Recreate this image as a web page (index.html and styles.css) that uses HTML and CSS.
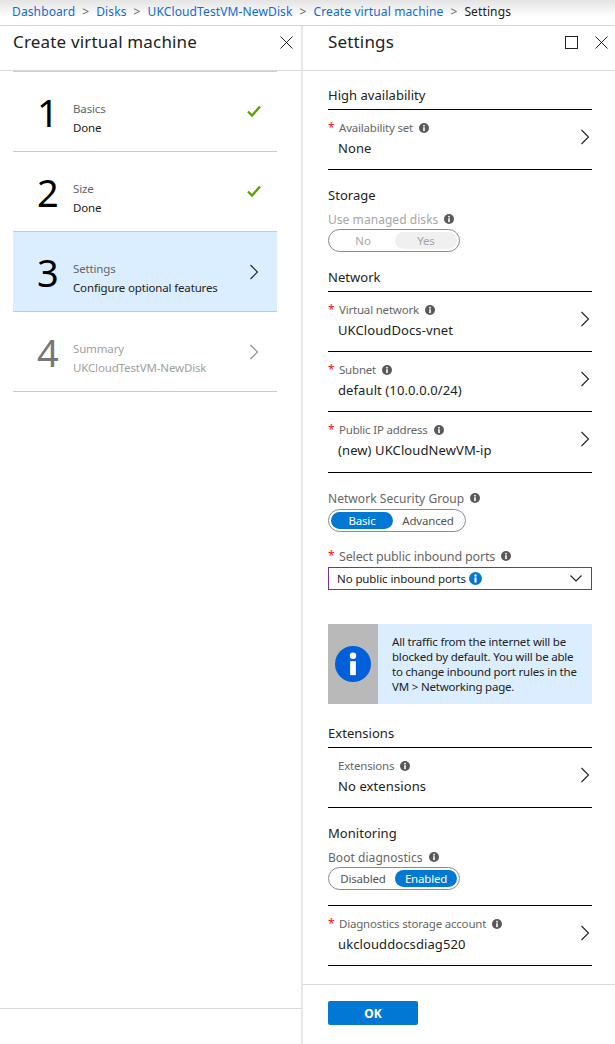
FILE: index.html
```html
<!DOCTYPE html>
<html lang="en">
  <head>
    <meta charset="UTF-8" />
    <title>Settings</title>
    <link rel="stylesheet" href="styles.css">
  </head>
  <body>
    <svg class="defs" width="0" height="0">
      <symbol id="chev" viewBox="0 0 10 16"><path d="M1.5 1 L8.5 8 L1.5 15" fill="none" stroke="currentColor" stroke-width="1.1"/></symbol>
      <symbol id="check" viewBox="0 0 14 12"><path d="M1 6.5 L5 10.5 L13 1.5" fill="none" stroke="#57a300" stroke-width="2.4"/></symbol>
      <symbol id="close" viewBox="0 0 13 13"><path d="M.5 .5 L12.5 12.5 M12.5 .5 L.5 12.5" fill="none" stroke="#222" stroke-width="1"/></symbol>
      <symbol id="info" viewBox="0 0 10 10"><circle cx="5" cy="5" r="5" fill="currentColor"/><rect x="4.2" y="4.2" width="1.6" height="3.9" fill="#fff"/><circle cx="5" cy="2.7" r=".9" fill="#fff"/></symbol>
    </svg>

    <nav class="crumbs">
      <a>Dashboard</a><i>&gt;</i><a>Disks</a><i>&gt;</i><a>UKCloudTestVM-NewDisk</a><i>&gt;</i><a>Create virtual machine</a><i>&gt;</i><span>Settings</span>
    </nav>

    <div class="panels">
      <section class="wizard">
        <header class="blade-head">
          <h2>Create virtual machine</h2>
          <svg class="head-icon"><use href="#close"/></svg>
        </header>
        <div class="steps">
          <div class="step">
            <div class="num">1</div>
            <div class="step-text"><div class="step-title">Basics</div><div>Done</div></div>
            <svg class="check"><use href="#check"/></svg>
          </div>
          <div class="step">
            <div class="num">2</div>
            <div class="step-text"><div class="step-title">Size</div><div>Done</div></div>
            <svg class="check"><use href="#check"/></svg>
          </div>
          <div class="step active">
            <div class="num">3</div>
            <div class="step-text"><div class="step-title">Settings</div><div>Configure optional features</div></div>
            <svg class="step-chev"><use href="#chev"/></svg>
          </div>
          <div class="step off">
            <div class="num">4</div>
            <div class="step-text"><div class="step-title">Summary</div><div>UKCloudTestVM-NewDisk</div></div>
            <svg class="step-chev"><use href="#chev"/></svg>
          </div>
        </div>
        <div class="wizard-foot"></div>
      </section>

      <section class="settings">
        <header class="blade-head">
          <h2>Settings</h2>
          <div class="max-box"></div>
          <svg class="head-icon"><use href="#close"/></svg>
        </header>

        <div class="form">
          <h3>High availability</h3>
          <div class="field">
            <div>
              <div class="label"><b>*</b>Availability set<svg class="tip"><use href="#info"/></svg></div>
              <div class="value">None</div>
            </div>
            <svg class="chev"><use href="#chev"/></svg>
          </div>

          <h3 class="plain">Storage</h3>
          <div class="opt-label muted">Use managed disks<svg class="tip"><use href="#info"/></svg></div>
          <div class="toggle disabled w132"><span>No</span><span class="on">Yes</span></div>

          <h3 class="net">Network</h3>
          <div class="field">
            <div>
              <div class="label"><b>*</b>Virtual network<svg class="tip"><use href="#info"/></svg></div>
              <div class="value">UKCloudDocs-vnet</div>
            </div>
            <svg class="chev"><use href="#chev"/></svg>
          </div>
          <div class="field">
            <div>
              <div class="label"><b>*</b>Subnet<svg class="tip"><use href="#info"/></svg></div>
              <div class="value">default (10.0.0.0/24)</div>
            </div>
            <svg class="chev"><use href="#chev"/></svg>
          </div>
          <div class="field tall">
            <div>
              <div class="label"><b>*</b>Public IP address<svg class="tip"><use href="#info"/></svg></div>
              <div class="value">(new) UKCloudNewVM-ip</div>
            </div>
            <svg class="chev"><use href="#chev"/></svg>
          </div>

          <div class="opt-label nsg">Network Security Group<svg class="tip"><use href="#info"/></svg></div>
          <div class="toggle w138"><span class="on">Basic</span><span>Advanced</span></div>

          <div class="opt-label ports"><b>*</b>Select public inbound ports<svg class="tip"><use href="#info"/></svg></div>
          <div class="select">
            <span>No public inbound ports</span>
            <svg class="tip-blue"><use href="#info"/></svg>
            <svg class="caret" viewBox="0 0 12 7"><path d="M.5 .5 L6 6 L11.5 .5" fill="none" stroke="#222" stroke-width="1.1"/></svg>
          </div>

          <div class="notice">
            <div class="notice-side"><svg class="notice-icon"><use href="#info"/></svg></div>
            <p>All traffic from the internet will be blocked by default. You will be able to change inbound port rules in the VM &gt; Networking page.</p>
          </div>

          <h3 class="ext">Extensions</h3>
          <div class="field">
            <div>
              <div class="label"><em></em>Extensions<svg class="tip"><use href="#info"/></svg></div>
              <div class="value">No extensions</div>
            </div>
            <svg class="chev"><use href="#chev"/></svg>
          </div>

          <h3 class="plain">Monitoring</h3>
          <div class="opt-label">Boot diagnostics<svg class="tip"><use href="#info"/></svg></div>
          <div class="toggle w132"><span>Disabled</span><span class="on">Enabled</span></div>

          <div class="field last">
            <div>
              <div class="label"><b>*</b>Diagnostics storage account<svg class="tip"><use href="#info"/></svg></div>
              <div class="value">ukclouddocsdiag520</div>
            </div>
            <svg class="chev"><use href="#chev"/></svg>
          </div>
        </div>

        <footer class="settings-foot">
          <button type="button">OK</button>
        </footer>
      </section>
    </div>
  </body>
</html>
```

FILE: styles.css
```css
* {
  box-sizing: border-box;
}

html,
body {
  margin: 0;
  height: 1044px;
  overflow: hidden;
}

body {
  font-family: "Noto Sans", Arial, sans-serif;
  font-size: 12px;
  color: #222;
  background-color: #fff;
}

.defs {
  position: absolute;
}

/* breadcrumb */
.crumbs {
  height: 26px;
  padding: 0 0 2px 12px;
  display: flex;
  align-items: center;
  white-space: nowrap;
  letter-spacing: 0.12px;
  background: linear-gradient(#e4e4e4, #fff 70%);
  border-bottom: 1px solid #d4d4d4;
}

.crumbs a {
  color: #0f6cd6;
}

.crumbs i {
  font-style: normal;
  color: #666;
  margin: 0 7px;
}

.panels {
  display: flex;
  height: 1018px;
}

.blade-head {
  height: 45px;
  padding-top: 1px;
  display: flex;
  border-bottom: 1px solid #d9d9d9;
}

.blade-head h2 {
  margin: 0;
  flex: 1;
  font-size: 17px;
  line-height: 30px;
  font-weight: 400;
  letter-spacing: 0.17px;
}

.head-icon {
  width: 13px;
  height: 13px;
  margin-top: 9px;
}

/* left blade */
.wizard {
  width: 303px;
  border-right: 2px solid #e6e6e6;
  display: flex;
  flex-direction: column;
}

.wizard .blade-head {
  padding-left: 13px;
  padding-right: 8px;
}

.steps {
  flex: 1;
  margin: 0 24px 0 13px;
  border-top: 1px solid #cfcfcf;
}

.step {
  height: 80px;
  display: flex;
  align-items: center;
  border-bottom: 1px solid #c8c8c8;
}

.step .num {
  width: 60px;
  padding-left: 24px;
  font-size: 38px;
  line-height: 42px;
  color: #000;
}

.step-text {
  flex: 1;
  padding-top: 12px;
  line-height: 19px;
  letter-spacing: -0.15px;
  font-size: 11.5px;
}

.step-title {
  color: #666;
}

.check {
  width: 14px;
  height: 12px;
  margin-right: 16px;
  margin-bottom: 1px;
}

.step-chev {
  width: 10px;
  height: 16px;
  margin-right: 18px;
  color: #222;
}

.step.active {
  background-color: #dbeeff;
}

.step.off .num {
  color: #777;
}

.step.off .step-text,
.step.off .step-title {
  color: #a0a0a0;
}

.step.off .step-chev {
  color: #888;
}

.wizard-foot {
  height: 36px;
  border-top: 1px solid #d9d9d9;
}

/* right blade */
.settings {
  flex: 1;
  display: flex;
  flex-direction: column;
}

.settings .blade-head {
  padding-left: 25px;
  padding-right: 7px;
}

.max-box {
  width: 13px;
  height: 13px;
  margin: 9px 17px 0 0;
  border: 1px solid #222;
}

.form {
  flex: 1;
  padding: 0 23px 0 25px;
}

.form h3 {
  margin: 0;
  height: 39px;
  padding-top: 15px;
  font-size: 13px;
  line-height: 18px;
  font-weight: 400;
  letter-spacing: 0.03px;
  border-bottom: 1px solid #000;
}

.form h3.plain {
  height: 41px;
  padding-top: 16px;
  border-bottom: none;
}

.form h3.net {
  height: 40px;
  padding-top: 16px;
}

.form h3.ext {
  height: 44px;
  padding-top: 20px;
}

.field {
  height: 60px;
  display: flex;
  align-items: center;
  justify-content: space-between;
  border-bottom: 1px solid #000;
  padding-bottom: 4px;
}

.field.tall {
  height: 61px;
}

.field.last {
  margin-top: 15px;
  border-top: 1px solid #000;
  height: 61px;
}

.label {
  display: flex;
  align-items: center;
  font-size: 11.5px;
  line-height: 20px;
  color: #666;
  letter-spacing: -0.2px;
}

.label b,
.opt-label b {
  width: 11px;
  color: #e81123;
  font-weight: 400;
  font-size: 12px;
  line-height: 14px;
}

.label em {
  width: 10px;
}

.value {
  padding-left: 10px;
  font-size: 13px;
  line-height: 20px;
  letter-spacing: 0.1px;
}

.chev {
  width: 10px;
  height: 16px;
  color: #222;
  margin: 0 2px 2px 0;
}

.tip {
  width: 10px;
  height: 10px;
  margin-left: 6px;
  color: #595959;
}

.opt-label {
  display: flex;
  align-items: center;
  height: 16px;
  margin-bottom: 2px;
  color: #666;
  font-size: 12px;
  letter-spacing: 0.05px;
}

.opt-label.muted {
  color: #a6a6a6;
}

.opt-label.nsg {
  margin-top: 17px;
  margin-bottom: 3px;
}

.opt-label.ports {
  margin-top: 16px;
  margin-bottom: 3px;
  font-size: 12.5px;
  letter-spacing: -0.15px;
}

.toggle {
  height: 23px;
  display: flex;
  align-items: stretch;
  padding: 2px;
  border: 1px solid #8a8a8a;
  border-radius: 12px;
  font-size: 11.5px;
  letter-spacing: -0.2px;
  color: #555;
}

.w132 {
  width: 132px;
}

.w138 {
  width: 138px;
}

.toggle span {
  flex: 1;
  display: flex;
  align-items: center;
  justify-content: center;
  border-radius: 9px;
  padding-bottom: 1px;
}

.toggle .on {
  flex: none;
  width: 62px;
  color: #fff;
  background-color: #0078d4;
}

.toggle.disabled {
  color: #a6a6a6;
}

.toggle.disabled .on {
  color: #a6a6a6;
  background-color: #f0f0f0;
}

.select {
  height: 23px;
  display: flex;
  align-items: center;
  padding: 0 9px 0 8px;
  border: 1px solid #7a2d9e;
  font-size: 11.5px;
  letter-spacing: -0.1px;
}

.tip-blue {
  width: 13px;
  height: 13px;
  margin-left: 3px;
  color: #0078d4;
}

.caret {
  width: 12px;
  height: 7px;
  margin-left: auto;
}

.notice {
  height: 80px;
  margin-top: 34px;
  display: flex;
  background-color: #dbeeff;
}

.notice-side {
  flex: none;
  width: 50px;
  display: flex;
  align-items: center;
  justify-content: center;
  background-color: #b9b9b9;
}

.notice-icon {
  width: 36px;
  height: 36px;
  color: #005fdb;
}

.notice p {
  margin: 0;
  padding: 10px 12px 0 14px;
  font-size: 11.5px;
  line-height: 15px;
  letter-spacing: -0.2px;
}

.settings-foot {
  height: 60px;
  padding: 16px 0 0 25px;
  border-top: 1px solid #d9d9d9;
}

.settings-foot button {
  width: 90px;
  height: 24px;
  padding: 0;
  border: none;
  border-radius: 2px;
  color: #fff;
  background-color: #0078d4;
  font-family: "Noto Sans", Arial, sans-serif;
  font-size: 12px;
  font-weight: 700;
}
```
